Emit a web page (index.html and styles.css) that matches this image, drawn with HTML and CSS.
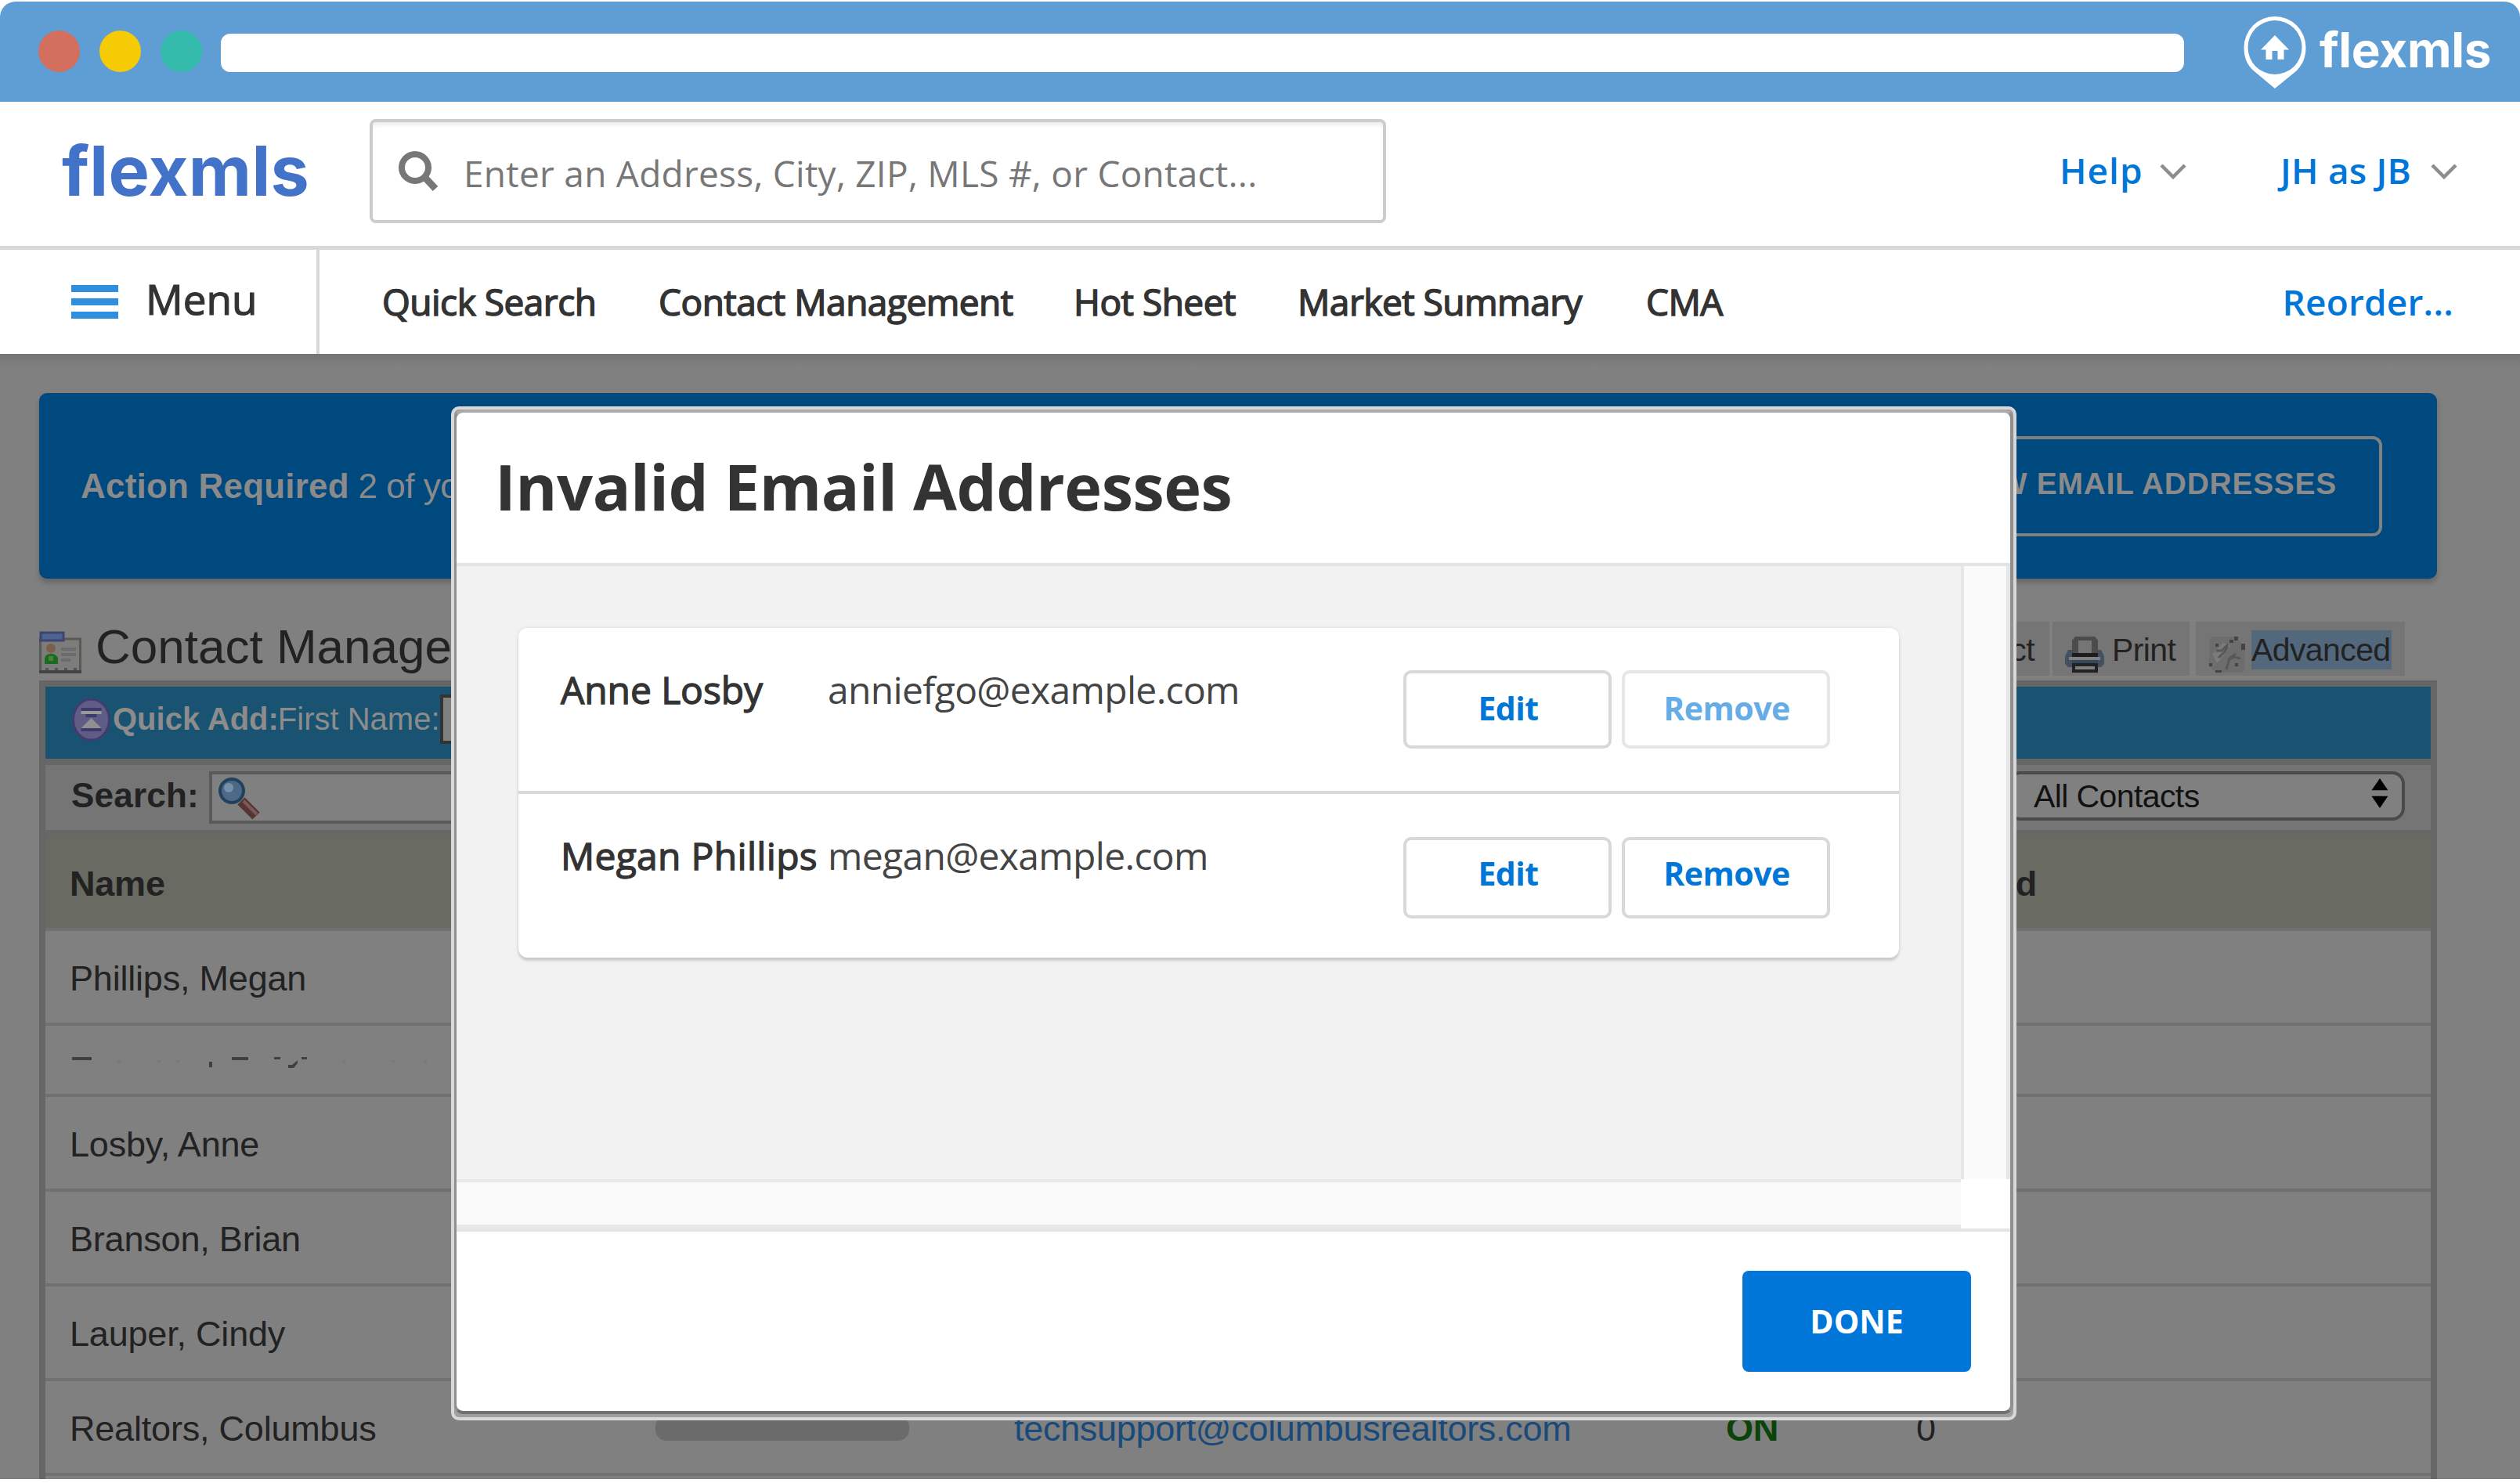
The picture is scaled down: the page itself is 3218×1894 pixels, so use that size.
FILE: index.html
```html
<!DOCTYPE html>
<html lang="en">
<head>
<meta charset="utf-8">
<title>Contact Management</title>
<link rel="stylesheet" href="styles.css">
</head>
<body>
<div class="titlebar">
  <span class="dot dot-red"></span><span class="dot dot-yellow"></span><span class="dot dot-green"></span>
  <div class="address"></div>
  <svg class="pin" viewBox="0 0 80 92"><path fill="#fff" fill-rule="evenodd" d="M40 0a39.500 39.500 0 0 1 39.500 39.500c0 14-5 23-12 30L40 92 13 69.500c-8-7-12.500-16-12.500-30A39.500 39.500 0 0 1 40 0zm0 5a34.500 34.500 0 1 0 0 69 34.500 34.500 0 0 0 0-69z"/><path fill="#fff" d="M40 24 58 42.500h-6.500V55h-8V44h-7v11h-8V42.500H22z"/></svg>
  <span class="brand">flexmls</span>
</div>

<header class="top">
  <span class="logo">flexmls</span>
  <div class="searchbox">
    <svg class="glass" viewBox="0 0 52 52" fill="none" stroke="#777" stroke-width="8"><circle cx="22" cy="21" r="17"/><path d="M34 33 48 48" stroke-width="9"/></svg>
    <span>Enter an Address, City, ZIP, MLS #, or Contact...</span>
  </div>
  <div class="drop help"><span>Help</span><svg viewBox="0 0 34 20"><path d="M2 2 17 17 32 2"/></svg></div>
  <div class="drop user"><span>JH as JB</span><svg viewBox="0 0 34 20"><path d="M2 2 17 17 32 2"/></svg></div>
</header>

<nav class="nav">
  <div class="menu"><span class="burger"><i></i><i></i><i></i></span><span class="menu-label">Menu</span></div>
  <div class="links"><span>Quick Search</span><span>Contact Management</span><span>Hot Sheet</span><span>Market Summary</span><span>CMA</span></div>
  <a class="reorder">Reorder...</a>
</nav>

<main class="page">
  <section class="banner">
    <p><b>Action Required</b> 2 of your</p>
    <div class="review">VIEW EMAIL ADDRESSES</div>
  </section>

  <div class="heading">
    <svg class="card-icon" viewBox="0 0 54 54"><path fill="#7c7d7b" stroke="#5a5a54" stroke-width="3" d="M1.500 10h51v42h-51z"/><path fill="#4c6490" stroke="#3d4570" stroke-width="3" d="M2 2h29v10H2z"/><circle cx="15" cy="22" r="6" fill="#7c5f48"/><path fill="#1c6a22" d="M7 42V34q2-5 8-5t9 5v8z"/><path fill="#46843c" d="M12 32h6v6h-6z"/><path stroke="#6b6b6b" stroke-width="4" d="M28 23h19M28 30h19M28 37h12"/><path stroke="#444" stroke-width="4" d="M0 52h54"/><path stroke="#555" stroke-width="3" stroke-dasharray="4 8" d="M8 48.500h42"/></svg>
    <h1>Contact Management</h1>
    <div class="tabs">
      <span class="tab tab-add">Add Contact</span>
      <span class="tab tab-print"><svg viewBox="0 0 50 46"><path fill="#444f60" d="M4 17h42l4 8v10l-4 4H4l-4-4V25z"/><path fill="#4c4c4c" d="M13 0h25l4 5v18H9V5z"/><path fill="#757575" d="M17 5h17v16H17z"/><path fill="#1d1d1d" d="M9 21h33v5H9z"/><path fill="#808080" d="M5 26h40v4H5z"/><path fill="#35475c" d="M9 30h33v4H9z"/><path fill="#222" d="M9 34h33v12H9z"/><path fill="#808080" d="M13 38h25v4H13z"/></svg>Print</span>
      <span class="tab tab-adv"><svg viewBox="0 0 46 46"><path fill="#6d6d6d" d="M4 0h28l6 5 8 7v30l-4 4H8l-8-8V4z"/><path fill="#7b7b7b" d="M4 22 18 8l10 4-8 10-10 12z"/><g fill="none" stroke="#585858" stroke-width="3"><path d="M9 18h7l8-8M12 27l8-8 4-6M22 42l4-14 8-6M24 30l8-4 8 2"/></g><path fill="#444" d="M32 0h5v5h-5zM41 9h5v8h-5zM0 34h4v4H0zM8 43h8v3H8zM33 34h4v4h-4zM26 4h5v4h-5zM8 9h4v4H8z"/></svg><mark>Advanced</mark></span>
    </div>
  </div>

  <section class="table">
    <div class="quick">
      <svg viewBox="0 0 48 54"><ellipse cx="24" cy="27" rx="23" ry="26" fill="#5f5c86" stroke="#403d6e" stroke-width="3"/><path fill="#9a9a9a" d="M11 16h26v4H11z"/><path fill="#3c3a6c" d="M11 12h26v4H11zM17 20h14v4H17zM11 38h26v4H11z"/><path fill="#909090" d="M24 25 37 38H11z"/></svg>
      <b>Quick Add:</b><span>First Name:</span><i class="field"></i>
    </div>
    <div class="filter">
      <b>Search:</b>
      <div class="find"><svg viewBox="0 0 54 54"><path stroke="#573434" stroke-width="13" d="m29 30 19 19"/><path stroke="#7b5a5a" stroke-width="4" d="m32 30 17 17"/><circle cx="17" cy="17" r="15" fill="#4c6a88" stroke="#22415c" stroke-width="4"/><circle cx="13" cy="13" r="6" fill="#7590a8"/></svg></div>
      <div class="select"><span>All Contacts</span><svg viewBox="0 0 22 40"><path d="M11 0 22 16H0zM11 40 22 24H0z"/></svg></div>
    </div>
    <div class="row thead"><span>Name</span><span></span><span></span><span></span><span class="last">Saved</span></div>
    <div class="row"><span>Phillips, Megan</span></div>
    <div class="row short"><svg viewBox="0 0 480 30"><path fill="#404040" d="M3 7h25v4H3zM207 7h21v4h-21zM261 7h8v3h-8zM178 13h4v7h-4zM279 17h5l7-6v4l-5 6h-7zM296 7h7v3h-7z"/><path fill="#787878" d="M61 11h4v3h-4zM112 11h4v3h-4zM136 11h4v3h-4zM348 11h4v3h-4zM411 11h4v3h-4zM452 11h4v3h-4z"/></svg></div>
    <div class="row"><span>Losby, Anne</span></div>
    <div class="row"><span>Branson, Brian</span></div>
    <div class="row"><span>Lauper, Cindy</span></div>
    <div class="row"><span>Realtors, Columbus</span><span class="pill"></span><span class="mail">techsupport@columbusrealtors.com</span><span class="on">ON</span><span>0</span></div>
    <div class="row"></div>
  </section>
</main>

<div class="modal">
  <div class="modal-inner">
    <h2>Invalid Email Addresses</h2>
    <div class="modal-body">
      <div class="pane">
        <div class="card">
          <div class="entry"><strong>Anne Losby</strong><span class="addr">anniefgo@example.com</span><span class="btn">Edit</span><span class="btn off">Remove</span></div>
          <div class="entry second"><strong>Megan Phillips</strong><span class="addr">megan@example.com</span><span class="btn">Edit</span><span class="btn">Remove</span></div>
        </div>
      </div>
      <div class="vbar"></div>
      <div class="hbar"></div>
      <div class="corner"></div>
    </div>
    <div class="modal-foot"><span class="done">DONE</span></div>
  </div>
</div>
</body>
</html>
```
FILE: styles.css
```css
* { box-sizing: border-box; }
body { margin: 0; width: 3218px; height: 1894px; overflow: hidden; position: relative; background: #fff; font-family: "Open Sans", sans-serif; color: #333; white-space: nowrap; }
svg { display: block; flex: none; }

/* Browser bar */
.titlebar { display: flex; align-items: center; height: 128px; margin-top: 2px; padding-left: 49px; background: #5f9dd5; border-radius: 20px 20px 0 0; }
.dot { width: 53px; height: 53px; border-radius: 50%; margin: 0 25px 1px 0; }
.dot-red { background: #d36f5d; }
.dot-yellow { background: #f4cb05; }
.dot-green { background: #35bbab; }
.address { width: 2507px; height: 49px; margin: 2px 0 0 -1px; border-radius: 12px; background: #fff; }
.pin { width: 80px; height: 92px; margin: 2px 0 0 76px; }
.brand { margin: 0 0 5px 17px; font: 700 62px/70px Inter, sans-serif; color: #fff; letter-spacing: -0.3px; }

/* Header */
.top { display: flex; align-items: center; height: 189px; border-bottom: 5px solid #d8d8d8; padding-left: 79px; }
.logo { width: 393px; margin-bottom: 8px; font: 700 88px/100px Inter, sans-serif; letter-spacing: 0.3px; color: #4373c9; }
.searchbox { display: flex; align-items: center; width: 1298px; height: 133px; margin-bottom: 7px; padding-left: 32px; border: 4px solid #ccc; border-radius: 8px; box-shadow: inset 0 6px 4px -2px #eee; }
.searchbox span { margin: 5px 0 0 32px; font-size: 46px; line-height: 60px; letter-spacing: 0.26px; color: #777; }
.glass { width: 52px; height: 52px; }
.drop { display: flex; align-items: center; margin-bottom: 10px; font-size: 46px; font-weight: 600; line-height: 60px; color: #0077d8; }
.drop svg { width: 34px; height: 20px; margin-top: 3px; fill: none; stroke: #8d8d8d; stroke-width: 4.5px; }
.help { margin-left: 860px; width: 282px; letter-spacing: 1px; }
.help span { width: 128px; }
.user { letter-spacing: 0.2px; }
.user span { width: 192px; }

/* Navigation */
.nav { display: flex; align-items: center; height: 133px; }
.menu { display: flex; align-items: center; width: 408px; height: 133px; padding-left: 91px; border-right: 4px solid #d8d8d8; }
.burger { display: grid; gap: 8px; }
.burger i { width: 60px; height: 9px; background: #2f8fdf; }
.menu-label { margin: 0 0 8px 35px; font-size: 53px; line-height: 66px; letter-spacing: 0; -webkit-text-stroke: 1.2px; }
.links { display: grid; grid-template-columns: 353px 530px 286px 445px auto; margin: 0 0 1px 80px; font-size: 46px; line-height: 60px; letter-spacing: -0.5px; -webkit-text-stroke: 1.5px; }
.reorder { margin: 0 85px 2px auto; font-size: 46px; font-weight: 600; line-height: 60px; color: #0077d8; letter-spacing: 0.2px; }

/* Dimmed page */
.page { height: 1437px; padding: 50px 0 0 50px; overflow: hidden; background: linear-gradient(#747474, #7a7a7a 8px, #808080 16px); font-family: "Liberation Sans", Arial, sans-serif; color: #222; }
.banner { display: flex; align-items: center; justify-content: space-between; width: 3062px; height: 237px; padding: 0 70px 0 53px; border-radius: 10px; background: #00497f; box-shadow: 0 5px 6px #666; color: #8a8a8a; font-size: 44px; line-height: 56px; }
.banner p { margin: 0; width: 476px; overflow: hidden; letter-spacing: -0.5px; }
.banner b { letter-spacing: 0.2px; }
.review { height: 128px; padding: 0 54px 6px; border: 4px solid #808080; border-radius: 12px; font-size: 39px; font-weight: 700; line-height: 114px; letter-spacing: 0.7px; }
.heading { display: flex; align-items: flex-end; width: 3062px; height: 130px; padding-right: 41px; }
.card-icon { width: 54px; height: 54px; margin-bottom: 9px; }
.heading h1 { margin: 0 0 12px 18px; font-size: 62px; font-weight: 400; line-height: 62px; letter-spacing: 0; }
.tabs { display: flex; margin: 0 0 6px auto; font-size: 41px; line-height: 50px; letter-spacing: -0.6px; }
.tab { display: flex; align-items: center; height: 69px; padding-top: 2px; background: #757575; }
.tab-add { padding: 2px 19px 0; margin-right: 4px; }
.tab-print { width: 175px; padding-left: 16px; margin-right: 8px; }
.tab-print svg { width: 50px; height: 46px; margin: 13px 10px 0 0; }
.tab-adv { width: 267px; padding-left: 17px; }
.tab-adv svg { width: 46px; height: 46px; margin: 13px 8px 0 0; }
mark { width: 179px; background: #53687d; color: #222; }

/* Contact table */
.table { width: 3062px; border: solid #666; border-width: 8px 8px 0; }
.quick { display: flex; align-items: center; height: 100px; padding: 0 0 12px 34px; background: #195371; border-bottom: 8px solid #666; font-size: 40px; line-height: 50px; color: #8c8c8c; }
.quick svg { width: 49px; height: 54px; margin-top: 4px; }
.quick b { margin: 2px 0 0 3px; }
.quick span { margin: 2px 0 0 -1px; }
.field { width: 14px; height: 63px; margin: 3px 0 0 0; border: 4px solid #333; border-right: 0; background: #808080; }
.filter { display: flex; align-items: center; height: 83px; padding: 0 33px; background: #757575; font-size: 44px; line-height: 50px; }
.filter b { width: 176px; padding-bottom: 5px; letter-spacing: 0.2px; }
.find { width: 700px; height: 67px; padding: 4px 8px; border: 4px solid #5a5a5a; background: #808080; }
.find svg { width: 54px; height: 54px; }
.select { display: flex; align-items: center; justify-content: space-between; width: 507px; height: 63px; margin: -4px 0 0 auto; padding: 0 17px 0 29px; border: 4px solid #4a4a4a; border-radius: 16px; background: #808080; font-size: 41px; letter-spacing: -0.6px; color: #111; }
.select svg { width: 22px; height: 38px; margin-bottom: 8px; }
.row { display: grid; grid-template-columns: 748px 458px 909px 243px 154px; align-items: center; height: 121px; padding: 4px 0 0 31px; border-bottom: 4px solid #707070; font-size: 45px; line-height: 56px; letter-spacing: -0.2px; }
.thead { height: 129px; padding-top: 12px; background: linear-gradient(#666, #696a62 14px); font-weight: 700; }
.last { text-align: right; }
.short { height: 91px; }
.short svg { width: 480px; height: 30px; margin-top: 4px; }
.pill { width: 324px; height: 32px; border-radius: 14px; background: #6b6b6b; margin-top: -1px; }
.mail { color: #1a4a7a; letter-spacing: -0.3px; }
.on { color: #0b430b; font-weight: 700; }

/* Modal */
.modal { position: absolute; left: 576px; top: 519px; width: 1999px; height: 1295px; border: 4px solid #d8d8d8; border-radius: 10px; background: #a0a0a0; }
.modal-inner { height: 1283px; border: solid #909090; border-width: 4px 4px 4px 3px; border-top-color: #aaa; border-bottom-color: #707070; border-radius: 12px; background: #fff; overflow: hidden; }
.modal h2 { height: 196px; margin: 0; padding: 0 0 5px 49px; border-bottom: 4px solid #e4e4e4; font-size: 81px; line-height: 187px; font-weight: 700; letter-spacing: -0.5px; }
.modal-body { display: grid; grid-template: 783px 63px / 1921px 63px; background: #f2f2f2; }
.pane { padding: 79px; }
.card { width: 1763px; height: 421px; border-radius: 12px; background: #fff; box-shadow: 0 4px 3px #ccc, 0 0 5px #ddd; }
.entry { display: flex; align-items: flex-start; height: 212px; padding: 49px 0 0 54px; border-bottom: 4px solid #d8d8d8; font-size: 48px; line-height: 60px; }
.second { height: 209px; border: 0; }
.entry strong { width: 341px; font-weight: 400; letter-spacing: -0.1px; -webkit-text-stroke: 1.3px; }
.second strong { letter-spacing: 0.3px; }
.addr { width: 735px; letter-spacing: -0.67px; color: #444; }
.btn { width: 266px; height: 100px; margin: 5px 13px 0 0; padding-left: 2px; border: 4px solid #d8d8d8; border-radius: 10px; color: #0077d8; font-size: 41px; font-weight: 700; line-height: 88px; text-align: center; letter-spacing: -0.5px; }
.second .btn { height: 104px; margin-top: 6px; line-height: 85px; }
.entry .off { border-color: #e6e6e6; color: #66ade8; }
.vbar { border: solid #e6e6e6; border-width: 0 5px 0 4px; background: #fafafa; }
.hbar { border: solid #e8e8e8; border-width: 4px 0 5px; background: #fafafa; }
.corner { background: #fff; }
.modal-foot { display: flex; justify-content: flex-end; height: 233px; padding: 50px 50px 0 0; border-top: 4px solid #e4e4e4; }
.done { width: 292px; height: 129px; border-radius: 8px; background: #0077d8; color: #fff; font-size: 41px; font-weight: 700; line-height: 128px; text-align: center; letter-spacing: 0; }
```
